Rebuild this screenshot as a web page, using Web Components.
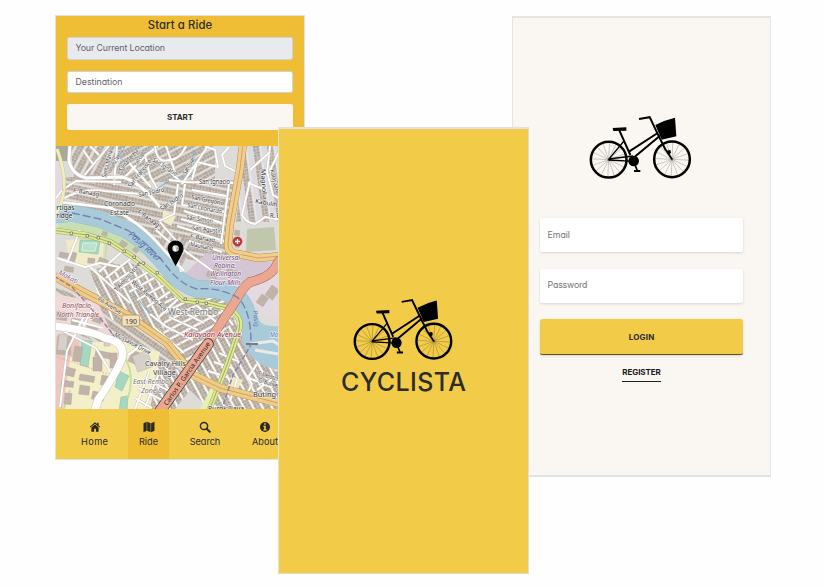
<!DOCTYPE html>
<html lang="en"><head><meta charset="utf-8"><title>Cyclista</title>
<style>
body{margin:0;background:#fefefe;font-family:Inter,"Open Sans",sans-serif;font-feature-settings:"cv11";color:#2c2c2a}
</style></head><body>
<cy-board>
  <ride-screen slot="ride"></ride-screen>
  <login-screen slot="login"></login-screen>
  <splash-screen slot="splash"></splash-screen>
</cy-board>
<script>
const define=(name,html,after)=>customElements.define(name,class extends HTMLElement{
  constructor(){super();this.attachShadow({mode:'open'}).innerHTML=html}
  connectedCallback(){if(after)after.call(this)}
});

/* Text tracked out to an exact width */
define('fit-text','<style>:host{display:inline-block;white-space:nowrap;line-height:1}span{display:inline-block}</style><span><slot></slot></span>',function(){
  const s=this.shadowRoot.querySelector('span'),n=this.textContent.length,w=+this.getAttribute('w');
  const ls=(w-s.getBoundingClientRect().width)/(n-1);
  s.style.letterSpacing=ls+'px';s.style.marginRight=-ls+'px';
});

const spokes=(x,y)=>Array.from({length:16},(_,i)=>{const a=i*Math.PI/8+.05;return `M${x} ${y}L${(x+51*Math.cos(a)).toFixed(1)} ${(y+51*Math.sin(a)).toFixed(1)}`}).join('');
define('cy-bike',`<style>:host{display:block}svg{display:block;width:100%}</style>
<svg viewBox="25 30 315 195" fill="none" stroke="#000">
<path stroke-width="1" stroke-opacity=".6" d="${spokes(87,164)}${spokes(277,163)}"/>
<circle cx="87" cy="164" r="53.5" stroke-width="7.5"/><circle cx="277" cy="163" r="53.5" stroke-width="7.5"/>
<path stroke-width="6" d="M178 42L210 36.5L239 97L258 135"/><path stroke-width="5" d="M257 133L277 163"/>
<path stroke-width="6" d="M119 76L152 150M148 140L234 84M160 160L241 92"/>
<path stroke-width="4" d="M87 163L133 108M87 162L160 153M87 165L160 169"/>
<path fill="#000" stroke="none" d="M99 69L140 67V77L101 78ZM227 60Q255 45 286 38L290 94L246 104ZM259 137L272 135L274 143L266 151ZM163 195L182 195V201H163Z"/>
<circle cx="162" cy="168" r="16" fill="#000" stroke="none"/><path stroke-width="5" d="M166 180L173 197"/></svg>`);

define('cy-board',`<style>:host{display:block;position:relative;width:825px;height:587px;overflow:hidden}
::slotted(*){position:absolute}
::slotted([slot=ride]){left:55px;top:15px;width:250px;height:445px}
::slotted([slot=login]){left:512px;top:16px;width:259px;height:461px}
::slotted([slot=splash]){left:278px;top:127px;width:251px;height:447px}</style>
<slot name="ride"></slot><slot name="login"></slot><slot name="splash"></slot>`);

define('splash-screen',`<style>:host{display:flex;flex-direction:column;align-items:center;box-sizing:border-box;background:#f2cb49;border:1px solid #e9dfc0;border-top:2px solid #dfe1e1;border-left-color:#dfe1e1;padding-top:169px}
cy-bike{width:102.3px}fit-text{font-size:25px;font-weight:500;margin-top:8.5px}</style>
<cy-bike></cy-bike><fit-text w="125">CYCLISTA</fit-text>`);

define('login-field',`<style>:host{display:flex;align-items:center;box-sizing:border-box;width:203px;height:34px;padding-left:7.5px;margin-bottom:16.5px;background:#fff;border-radius:2px;box-shadow:0 1px 3px #0002;color:#757678;font-size:8.8px}</style><slot></slot>`);
define('login-screen',`<style>:host{display:flex;flex-direction:column;align-items:center;box-sizing:border-box;background:#faf7f2;border:1px solid #e4e4e3;border-top:2px solid #e3e4e4;border-bottom:2px solid #e1e2e2;padding-top:97px}
cy-bike{width:105px;margin:0 2px 38px 0}
.login{display:flex;align-items:center;justify-content:center;box-sizing:border-box;width:203px;height:36px;background:#f2cb49;border-bottom:1px solid #5f5020;border-radius:2.5px;box-shadow:0 1px 3px #0002;font-size:8px;font-weight:700}
.reg{font-size:8px;line-height:8px;font-weight:700;padding-bottom:5px;border-bottom:1px solid #222;margin-top:13px;color:#161616;height:8px}.reg fit-text{display:block}</style>
<cy-bike></cy-bike><login-field><fit-text w="22.5">Email</fit-text></login-field><login-field><fit-text w="40">Password</fit-text></login-field>
<div class="login"><fit-text w="25.5">LOGIN</fit-text></div><div class="reg"><fit-text w="38.5">REGISTER</fit-text></div>`);

define('nav-item',`<style>:host{display:flex;flex-direction:column;align-items:center;padding-top:11.5px;box-sizing:border-box;font-size:9.2px}
:host([active]){background:#efbe35}::slotted(svg){width:12px;height:12px;margin-bottom:4px}</style><slot name="icon"></slot><slot></slot>`);

/* City map, drawn in board coordinates */
const pat=(id,a,w,h,bg='#d9d5d0',b='#b0a397')=>`<pattern id="${id}" width="${w}" height="${h}" patternUnits="userSpaceOnUse" patternTransform="rotate(${a})"><rect width="${w}" height="${h}" fill="${bg}"/><path fill="${b}" d="M.3 2.2h2.5v2.6H.3zM3.3 2h3.1v3H3.3zM6.9 2.3h2.2v2.5H6.9zM9.7 2h2.7v2.9H9.7zM13 2.2h2.6v2.4H13zM.2 5.5h3.2v2.4H.2zM3.9 5.3h2.1v2.7H3.9zM6.6 5.5h3.2v2.4H6.6zM10.3 5.3h2v2.5h-2zM12.9 5.2h2.8v2.8h-2.8z"/><path d="M0 .9H${w}" stroke="#fff" stroke-width="${id=='n4'||id=='n5'?1.7:.5}"/></pattern>`;
const road=(d,w,c='#fff',k='#c9c2ba')=>`<path d="${d}" stroke="${k}" stroke-width="${w+.9}"/><path d="${d}" stroke="${c}" stroke-width="${w}"/>`;
const T=(t,x,y,w,a=0,c='#333',s=6.3,x2='')=>`<text x="${x}" y="${y}" textLength="${w}" lengthAdjust="spacingAndGlyphs" transform="rotate(${a} ${x} ${y})" fill="${c}" font-size="${s}" ${x2}>${t}</text>`;
const river='M50 215L72 213L100 219L127 230Q150 244 168 268Q180 284 197 289Q218 287 237 297Q251 309 251 343';
const or1='M243 144L240 169L230 224L228 245Q228 253 238 254L258 258L306 254';
const or2='M52 275L83 292L127 315L167 343L193 375L220 388L278 403L306 408';
const green='M52 230L87 235L110 242L133 257L160 278L183 300L207 303L227 308Q243 316 239 330L227 365L209 411';
const salmon='M306 245Q290 250 278 262Q273 277 250 282Q242 288 235 302L210 340L160 411';
const sq=(c,s)=>s.trim().split(' ').map(p=>{const[x,y,w,h,a=0]=p.split(',');return `<rect x="${x}" y="${y}" width="${w}" height="${h}" fill="${c}" stroke="#a99b90" stroke-width=".35" transform="rotate(${a} ${x} ${y})"/>`}).join('');
define('city-map',`<style>:host{display:block;overflow:hidden}svg{display:block;width:100%;height:100%;font-family:"Noto Sans",sans-serif}</style>
<svg viewBox="56 146 248 263" preserveAspectRatio="xMinYMin slice" fill="none" stroke-linejoin="round"><defs>
${pat('n1',12,16,8.6)}${pat('n2',-62,16,9)}${pat('n3',35,16,8.6)}${pat('n4',62,16,8.3)}${pat('n5',-28,16,8.6)}${pat('n6',82,16,14,'#dcdce0')}${pat('n7',-28,16,8.2)}</defs>
<rect x="50" y="140" width="260" height="275" fill="#dedcd9"/>
<path fill="url(#n2)" d="M70 146H150L120 176L75 182Z"/><path fill="url(#n1)" d="M62 178L125 172L170 200V262L130 222L62 208Z"/>
<path fill="url(#n7)" d="M120 146H215V182H120Z"/><path fill="url(#n1)" d="M165 180H240L226 262H190L155 225Z"/>
<path fill="url(#n6)" d="M246 146H304V222H236Z"/><path fill="url(#n2)" d="M160 225L192 245L175 280L160 258Z"/>
<path fill="url(#n4)" d="M90 270L130 262L185 300L163 340L100 300Z"/><path fill="url(#n3)" d="M56 288L115 308L165 345L190 375L160 395L105 345L56 326Z"/>
<path fill="url(#n5)" d="M165 298H226L236 325L195 375L163 340Z"/><path fill="url(#n4)" d="M205 350L235 320L275 372L304 365V415H215L180 380Z"/>
<path fill="url(#n4)" d="M130 360L180 370L190 390L175 409H128Z"/>
<path fill="#a8aa96" d="M56 146H68V161H56Z"/><path fill="#e5d9e2" d="M56 161L66 163L60 205H56ZM275 268L304 255V330L262 313L244 290L255 284Z"/>
<path fill="#d5c6d5" d="M176 283L206 253L250 259L277 263L250 280L235 299L195 286Z"/>
<path fill="#f0d9d7" d="M56 294L98 302L112 335H56Z"/><path fill="#edc7c0" d="M56 337H80L74 409H56Z"/>
<path fill="#f3efc9" d="M91 342L125 342L160 352L150 409H63L70 357L88 363Z"/>
<path fill="#f1ebc9" d="M66 240L104 239L102 266L70 264ZM163 210L176 216L171 226L162 221ZM231 376L243 380L234 395L226 391Z"/>
<path fill="#c8dfb4" d="M58 221L98 225L128 239L150 256L120 247L91 235L58 231Z"/>
<path fill="#c1c7ad" d="M247 229L274 227L276 250L246 252Z"/>
<path fill="#a5d8c1" stroke="#85baa5" stroke-width=".5" d="M80 240H100L98 254L79 252ZM82 340L92 341L88 367L80 365ZM119 371L129 376L122 391L115 387ZM121 397L128 396L127 411H119Z"/>
<path fill="#b7e2d0" stroke="#e7f1cd" d="M83 243H97L95 251H82Z"/>
<g stroke="#c4e398" stroke-width="2"><path d="M125 358Q135 375 128 398M76 238L107 239L105 262M70 390Q66 400 64 409"/></g>
<path d="${river}" stroke="#9bbcc9" stroke-width="17.5"/><path d="${river}" stroke="#a9cbd9" stroke-width="16.5"/>
<path fill="#a9cbd9" d="M235 292Q256 305 259 320Q266 332 304 321V372L274 369Q250 363 242 340Q245 315 232 306Z"/>
<path d="M250 344L273 341L290 352M255 350L278 354" stroke="#eceae2" stroke-width="3"/><path d="M246 344H258" stroke="#777" stroke-width="2"/>
<g stroke="#7eb8d2" stroke-width="1.1"><path d="M193 150Q197 170 185 177L172 179L158 188M131 289L145 308L164 325"/><path d="M125 146L120 158L153 180" stroke-width=".8"/></g>
${sq('#c1b3aa','58,335,14,19,5 75,346,8,15,10 93,357,9,14,0 96,350,16,6,12 110,353,7,15,0 67,367,9,8,15 80,374,15,6,10 62,380,12,6,8 80,385,10,9,8 93,391,12,8,12 65,393,7,11,5 102,375,11,10,10 57,311,11,8,10 72,318,10,8,10 87,325,11,7,8 64,327,7,6,5 94,315,9,6,20 72,252,5,10,15 60,252,9,5,10 100,257,12,7,25 110,262,10,6,25 65,266,9,5,10 88,258,7,5,5 133,350,14,12,25 216,263,7,10,30 228,268,13,6,20 208,271,10,5,20 235,230,5,5,8 236,240,4,7,5 262,294,8,10,35 272,285,9,12,35 103,231,5,4,20 122,240,7,5,35 135,247,5,4,40')}
${sq('#d5d1ca','132,356,16,17,-20 59,334,9,16,6 104,340,6,6,0')}
${[ 'M82 178L109 146M93 164L83 150M99 155L90 146M117 146L114 185M60 200Q86 186 105 191L140 194','M56 198L62 190L76 181L121 182','M125 177L146 155L158 146M145 155L150 176L158 190M129 163L151 187','M155 146Q157 164 169 160Q180 160 186 146M166 146L175 172M158 161L182 183','M182 184L208 146M169 180L186 182L235 183M192 180L197 162L218 167L215 150L205 146','M178 184L174 214L159 221M185 184L182 205L226 212M192 190L226 196M184 211L225 224M181 219L224 232M177 226L224 241M189 241L222 252','M229 184L221 244M229 147L222 155L225 166L237 172M270 146L267 172L273 195L293 206M248 183L266 190M250 181L242 215Q246 223 255 224L265 217L282 220','M270 152L250 170M281 148L270 170L277 188M160 222L185 251L218 275M156 230L174 246L181 272','M99 272L126 248M106 278L134 256M113 283L140 265M120 288L148 272M129 292L154 278M137 300L164 285M147 307L171 291M159 317L179 298M90 267L130 303','M67 263L80 230M57 258L85 267L100 263L119 267M150 314L172 331M155 328L184 353','M173 307L204 323M169 317L198 330M165 326L193 340M196 305L220 325M219 306L233 325','M219 353L237 361M214 362L232 368M208 371L227 377M204 378L220 386M242 369L252 384L244 400M230 401L237 380M249 378L273 388M257 390L272 379M257 364L247 379','M146 379L171 392M138 388L164 401M135 398L152 408M149 372L135 409M160 371L145 407','M61 330L96 348L111 373M84 316L67 351L60 407M72 320L103 328M93 307L82 329M109 310L113 320'].map(d=>road(d,1.9)).join('')}
${road('M70 144L69 160Q71 174 86 178L122 177Q139 181 160 207',3)}
${road('M54 326Q93 331 105 338Q126 342 122 358Q116 374 98 400L93 417',7.5)}
${road('M60 202L111 208Q144 225 163 249L184 271',2.6)}
${road('M128 355L140 346L151 352',2.5)}
${road('M57 149Q69 181 61 203L55 217',2.7,'#f0efb8','#c8c69f')}
<path d="M215 388L204 411" stroke="#e6f3b0" stroke-width="8"/>
${road(green,4.8,'#dfeb8c','#99a071')}<path d="${green}" stroke="#838d68" stroke-width=".7"/>
${road(or2,7.5,'#efcb88','#bd8d43')}<path d="${or2}" stroke="#a98042" stroke-width=".5"/>
${road(or1,7.2,'#f2ce8e','#bd8d43')}<path d="${or1}" stroke="#c09050" stroke-width=".7"/>
${road(salmon,8.6,'#eca792','#996650')}
<path d="M208 344L160 411" stroke="#333" stroke-width="11.4" stroke-linecap="round"/><path d="M208 344L160 411" stroke="#eca792" stroke-width="10" stroke-linecap="round"/>
<path d="${river}" stroke="#7583ae" stroke-width="1.4" stroke-dasharray="8 3"/><path d="M252 343L233 375L222 409" stroke="#8386b0" stroke-width="1.5" stroke-dasharray="5 2"/>
<path d="M54 276L72 287L104 323L115 337" stroke="#9d79a7" stroke-width="1.4" stroke-dasharray="5 2"/>
<path d="M62 190L130 188M57 357L108 374M168 342L201 346" stroke="#e4a3a0" stroke-width=".9" stroke-dasharray="1.5 1.5"/>
<g fill="#f4f4dc" stroke="#555" stroke-width=".6"><path d="M70 232h2.5v2.5H70zM86 234.5h2.5v2.5H86zM97 236.5h2.5v2.5H97zM108 242h2.5v2.5h-2.5zM123 250h2.5v2.5h-2.5zM133 256h2.5v2.5h-2.5zM142 262h2.5v2.5h-2.5zM156 271.5h2.5v2.5h-2.5zM184 298h2.5v2.5h-2.5zM196 301h2.5v2.5h-2.5zM205 302h2.5v2.5h-2.5z"/></g>
<g stroke="#fff" stroke-opacity=".75" stroke-width="1.3" paint-order="stroke">
${T('Santa Maria',106,178,28,-76)}${T('Santa Teresa',122,172,27,-52)}${T('Santa Teresita',113,169,21,-60)}${T('East Capitol',137,166,18,-58)}${T('San Francisco',131,188,34,-52)}${T('San Ignacio',152,161,28,33)}${T('San Juan',186,175,20,-62)}
${T('F. Banaag',73,192,26,10)}${T('San Isidro',139,197,26,-12)}${T('F. Banaag',137,213,25,35)}${T('San Isidro',162,211,26,-34)}
${T('San Ignacio',199,184,31)}${T('San Gregorio',191,199,33,11)}${T('San Leonardo',187,207,35,11)}${T('San Simon',186,219,27,9)}${T('San Agustin',192,230,30,6)}${T('F. Banaag',190,238,25,10)}${T('Mauslang',190,246,23,11)}
${T('Magnolia',261,169,31,87)}${T('Kalayaan',270,170,23,76)}${T('Kabulihan',255,203,30,10)}${T('R. B.',270,218,12,0)}
${T('Coronado',104,206,31,0,'#333',7)}${T('Estate',110,215,19,0,'#333',7)}${T('rtigas',56.5,210,18,0,'#222',7)}${T('ridge',56.5,218,16,0,'#222',7)}
${T('Universal',212,260,28,0,'#704878',6.8,'font-style="italic"')}${T('Robina,',214,268,22,0,'#704878',6.8,'font-style="italic"')}${T('Wellington',210,276,31,0,'#704878',6.8,'font-style="italic"')}${T('Flour Mills',210,285,31,0,'#704878',6.8,'font-style="italic"')}
${T('Bonifacio',62,308,29,0,'#8c4655',6.8,'font-style="italic"')}${T('North Triangle',56.5,317,42.5,0,'#8c4655',6.8,'font-style="italic"')}${T('Makati',58,274,21,28,'#865c93',6.8,'font-style="italic"')}
${T('Pili Avenue',97,300,27,32)}${T('T Alonzo Street',117,292,38,-49)}${T('West Rembo Ave',131,283,44,40)}${T('Mussavue Drive',114,336,40,28)}
${T('Cavalry Hills',145,366,41,0,'#333',7)}${T('Village',153,375,23,0,'#333',7)}${T('East Rembo',133,384,36,0,'#777',6.8,'font-style="italic"')}${T('Zone 8',141,393,21,0,'#777',6.8,'font-style="italic"')}
${T('West Rembo',168,315,50,0,'#737373',8.4)}${T('Kalayaan Avenue',184,337,57,0,'#9b3046',7,'font-style="italic"')}
${T('Pasig River',128,235,40,42,'#536aae',8.2,'font-style="italic" stroke="none"')}${T('Pasig',253,311,16,84,'#647aaa',6.2,'stroke="none"')}${T('Ma',270,337,8,0,'#5370b0',7,'font-style="italic"')}
${T('Buting',253,397,23,0,'#333',7)}${T('E. Mendoza',258,375,20,17)}${T('G. Bunye',258,382,20,17)}${T('Purok Ilaya',208,411,36,0,'#333',6.8)}</g>
${T('Carlos P. Garcia Avenue',167,406,76,-55,'#222',6.5)}
<rect x="122" y="315" width="17.5" height="11" rx="1.5" fill="#f1e2bd" stroke="#ad9060" stroke-width=".8"/>${T('190',125,324,12,0,'#333',7)}
<circle cx="237.5" cy="241.5" r="4.5" fill="#c73634" stroke="#963030" stroke-width=".6"/><path d="M235 241.5h5M237.5 239v5" stroke="#fff" stroke-width="1.4"/>
<path fill="#000" fill-rule="evenodd" d="M175.6 266Q167.6 252 167.6 248.5A8 8 0 0 1 183.6 248.5Q183.6 252 175.6 266ZM175.6 245.2A3.3 3.3 0 1 0 175.6 251.8A3.3 3.3 0 0 0 175.6 245.2Z"/>
</svg>`);

define('ride-screen',`<style>:host{display:flex;flex-direction:column;box-sizing:border-box;border:1px solid #e2e1dc;background:#efbe35}
header{box-sizing:border-box;flex:none;height:130px;padding:4px 11px 0;display:flex;flex-direction:column;align-items:center;background:#efbe35}
h1{font-size:11.3px;font-weight:500;margin:0 0 6px;line-height:11px;height:11px}
.f{box-sizing:border-box;flex:none;width:226px;border:1px solid #cfd3dc;border-radius:2.5px;display:flex;align-items:center;padding-left:7.5px;font-size:8.8px;color:#626467}
.a{height:23px;background:#e8eaed;margin-bottom:11px}.b{height:22px;background:#fff;margin-bottom:11px}
.s{width:226px;height:26px;background:#faf7f2;border-radius:2px;display:flex;align-items:center;justify-content:center;font-size:8px;font-weight:700}
city-map{flex:none;height:263px}nav{flex:1;background:#f2cb49;display:grid;grid-template-columns:67px 41px 72px 48px;padding-left:5px}</style>
<header><h1><fit-text w="64.5">Start a Ride</fit-text></h1><div class="f a"><fit-text w="89.5">Your Current Location</fit-text></div><div class="f b"><fit-text w="47">Destination</fit-text></div><div class="s"><fit-text w="26">START</fit-text></div></header>
<city-map></city-map>
<nav><nav-item><svg slot="icon" viewBox="0 0 12 12" fill="#2a2a20"><path d="M6 1.2L.8 5.8l.7.8L6 2.7l4.500 3.900.7-.8-1.600-1.400V1.700H8.100v1.400ZM6 3.500L2.400 6.600v4.100h2.700V7.800h1.800v2.900h2.700V6.600Z"/></svg><fit-text w="27">Home</fit-text></nav-item>
<nav-item active><svg slot="icon" viewBox="0 0 12 12" fill="#2a2a20"><path d="M.5 2.300L3.700.8v9L.5 11.300ZM4.200.8L7.600 2.300v9L4.200 9.800ZM8.100 2.300L11.500.8v9L8.100 11.300Z"/></svg><fit-text w="19">Ride</fit-text></nav-item>
<nav-item><svg slot="icon" viewBox="0 0 12 12" fill="none" stroke="#2a2a20"><circle cx="5" cy="5" r="3.600" stroke-width="1.500"/><path d="M7.700 7.700L10.700 10.700" stroke-width="2" stroke-linecap="round"/></svg><fit-text w="30.5">Search</fit-text></nav-item>
<nav-item><svg slot="icon" viewBox="0 0 12 12"><circle cx="6" cy="6" r="5" fill="#2a2a20"/><path fill="#f2cb49" d="M5.200 2.200h1.600v1.600H5.200ZM4.400 4.800h2.400v3.400h.8v1.200H4.400V8.200h.8V6h-.8Z"/></svg><fit-text w="26">About</fit-text></nav-item></nav>`);
</script></body></html>
